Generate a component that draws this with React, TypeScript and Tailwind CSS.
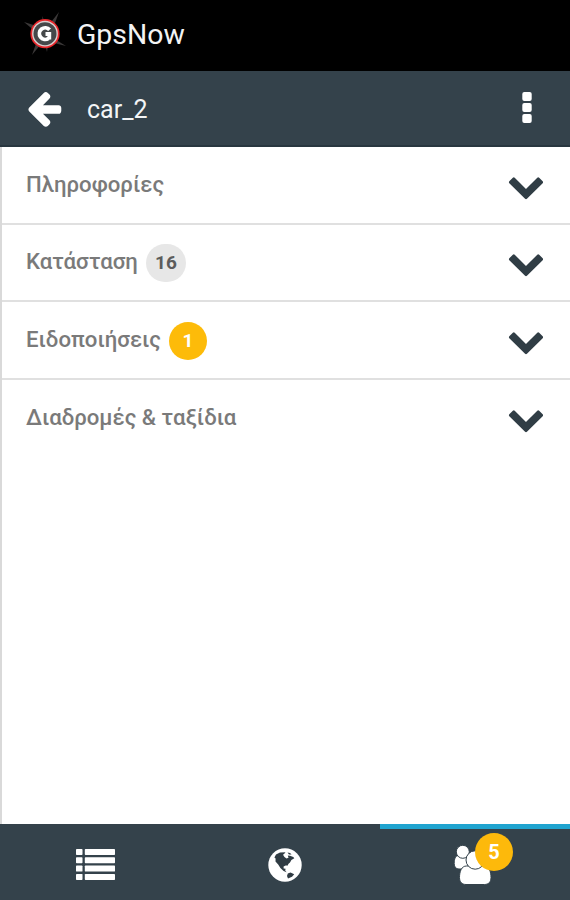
import React, { useState } from "react";
import { clsx } from "clsx";

type Section = {
  label: string;
  count?: number;
  highlight?: boolean;
};

const sections: Section[] = [
  { label: "Πληροφορίες" },
  { label: "Κατάσταση", count: 16 },
  { label: "Ειδοποιήσεις", count: 1, highlight: true },
  { label: "Διαδρομές & ταξίδια" },
];

function Logo() {
  return (
    <svg viewBox="0 0 44 48" className="h-12 w-11 flex-shrink-0">
      <g fill="#3b3838">
        <path d="M36 2 L29.5 20 L25 16z" />
        <path d="M1 12 L17 17 L13 22z" />
        <path d="M43 36 L30 28 L27 32z" />
        <path d="M9 45 L14 31 L18 34z" />
        <path d="M19 6 L22 12 L20 13z" />
        <path d="M24 42 L22.5 36 L25 35z" />
      </g>
      <circle cx="22" cy="23.7" r="14.6" fill="#e8262b" />
      <circle cx="22" cy="23.7" r="12.9" fill="#d9cfcf" />
      <circle cx="22" cy="23.7" r="11.5" fill="#45484a" />
      <path
        d="M26.6 19.8 A5.8 5.8 0 1 0 25.5 28.4 M22.5 24 H26.3 V29.5"
        fill="none"
        stroke="#fff"
        strokeWidth="3.8"
      />
    </svg>
  );
}

function ArrowIcon() {
  return (
    <svg viewBox="0 0 1792 1792" fill="currentColor" className="size-10 flex-shrink-0">
      <path d="M1536 896v128q0 53-32.5 90.5t-84.5 37.5h-704l293 294q38 36 38 90t-38 90l-75 76q-37 37-90 37-52 0-91-37l-651-652q-37-37-37-90 0-52 37-91l651-650q38-38 91-38 52 0 90 38l75 74q38 38 38 91t-38 91l-293 293h704q52 0 84.5 37.5t32.5 90.5z" />
    </svg>
  );
}

function ChevronIcon() {
  return (
    <svg viewBox="0 0 1792 1792" fill="currentColor" className="size-[38px] flex-shrink-0 text-[#303d45]">
      <path d="M1683 808l-742 741q-19 19-45 19t-45-19l-742-741q-19-19-19-45.5t19-45.5l166-165q19-19 45-19t45 19l531 531 531-531q19-19 45-19t45 19l166 165q19 19 19 45.5t-19 45.5z" />
    </svg>
  );
}

function MoreIcon() {
  return (
    <svg viewBox="0 0 10 31" fill="currentColor" className="h-[31px] w-2.5">
      <rect x="0.3" y="0" width="9.4" height="9" rx="2" />
      <rect x="0.3" y="11" width="9.4" height="9" rx="2" />
      <rect x="0.3" y="22" width="9.4" height="9" rx="2" />
    </svg>
  );
}

function ListIcon() {
  return (
    <svg viewBox="0 0 39 31" fill="currentColor" className="h-[31px] w-[39px]">
      {[0, 8.3, 16.6, 24.9].map((y) => (
        <g key={y}>
          <rect x="0" y={y} width="6.5" height="6" rx="0.7" />
          <rect x="8.8" y={y} width="30.2" height="6" rx="0.7" />
        </g>
      ))}
    </svg>
  );
}

function GlobeIcon() {
  return (
    <svg viewBox="0 0 34 34" className="size-[34px]">
      <circle cx="17" cy="17" r="16.7" fill="#fff" />
      <g fill="#2f3b43">
        <path d="M6.4 9.5 L8 6.5 L12 4.4 L17.5 4.2 L16.3 5.8 L15 6.8 L16.5 9 L18.5 10.6 L20.5 9.8 L19.8 7.4 L22 7.8 L25.3 9 L26.3 10.2 L23.4 12 L22 14.4 L20.3 16 L19.8 17.6 L17.6 17.6 L15.6 18.6 L15.6 20.6 L17.6 20.8 L17.2 22.4 L18.6 24.2 L15.6 23 L12.4 20 L10.2 16.6 L7.5 13.4 L7.6 10.6z" />
        <path d="M19.8 25.4 L22.5 24.6 L26.2 26.2 L24 28.8 L20 30.4 L19 28z" />
        <path d="M19.5 4.6 L22 5 L23.6 6.6 L21 6.4z" />
      </g>
    </svg>
  );
}

function UsersIcon() {
  return (
    <svg viewBox="0 0 42 40" fill="#fff" stroke="#34424b" strokeWidth="1" className="h-10 w-[42px]">
      <path d="M5 10.5 C1.2 10.5 .2 14 .2 18.5 C.2 22 2 24 5 24 H14 V12z" />
      <circle cx="8.8" cy="6.8" r="6.5" />
      <path d="M12.5 21 C7.5 21 5.5 26.5 5.5 32.5 C5.5 37 8 39.5 12 39.5 H30.5 C34.5 39.5 37 37 37 32.5 C37 26.5 35 21 30 21z" />
      <circle cx="21.2" cy="15" r="9.2" />
    </svg>
  );
}

function SectionRow({ section }: { section: Section }) {
  return (
    <button className="flex h-[77.6px] w-full items-center border-b-2 border-[#e0e0e0] pr-[25px] pl-6 last:border-transparent">
      <span className="pb-0.5 text-[22.2px] leading-7 font-medium text-[#7a7a7a]">{section.label}</span>
      {section.count !== undefined && (
        <span
          className={clsx(
            "mt-0.5 ml-2 flex h-[38px] items-center justify-center rounded-full text-[19px] font-bold",
            section.highlight ? "w-[38px] bg-[#fdbb09] text-white" : "w-10 bg-[#e7e7e7] text-[#5c5c5c]"
          )}
        >
          {section.count}
        </span>
      )}
      <span className="ml-auto">
        <ChevronIcon />
      </span>
    </button>
  );
}

export default function App() {
  const [tab, setTab] = useState(2);

  const tabs = [
    <ListIcon />,
    <GlobeIcon />,
    <span className="relative block pt-px">
      <UsersIcon />
      <span className="absolute -top-[11px] left-[21px] flex size-[38px] items-center justify-center rounded-full bg-[#fdb90b] text-[20px] font-bold text-white">
        5
      </span>
    </span>,
  ];

  return (
    <div className="flex h-[900px] w-[570px] flex-col overflow-hidden bg-white font-[Roboto,sans-serif]">
      {/* App title */}
      <div className="flex h-[71px] items-center bg-black pb-1 pl-[23px] text-[#f3f3f3]">
        <Logo />
        <h1 className="ml-2.5 pt-0.5 text-[28.4px] leading-8">GpsNow</h1>
      </div>

      {/* Header */}
      <header className="flex h-[76px] items-center border-b-2 border-[#28363f] bg-[#34424b] pr-[38px] pl-[27px] text-white">
        <ArrowIcon />
        <h2 className="ml-5 pt-[3px] text-[25px] leading-8 text-[#f3f5f6]">car_2</h2>
        <button className="ml-auto pb-0.5">
          <MoreIcon />
        </button>
      </header>

      {/* Sections */}
      <main className="flex-1 border-l-2 border-[#d9d9d9]">
        {sections.map((section) => (
          <SectionRow key={section.label} section={section} />
        ))}
      </main>

      {/* Bottom tabs */}
      <nav className="grid h-[76px] grid-cols-3 bg-[#34424b] text-white">
        {tabs.map((icon, i) => (
          <button
            key={i}
            onClick={() => setTab(i)}
            className={clsx(
              "flex items-center justify-center border-t-[5px]",
              tab === i ? "border-[#20a4d0]" : "border-transparent"
            )}
          >
            {icon}
          </button>
        ))}
      </nav>
    </div>
  );
}
